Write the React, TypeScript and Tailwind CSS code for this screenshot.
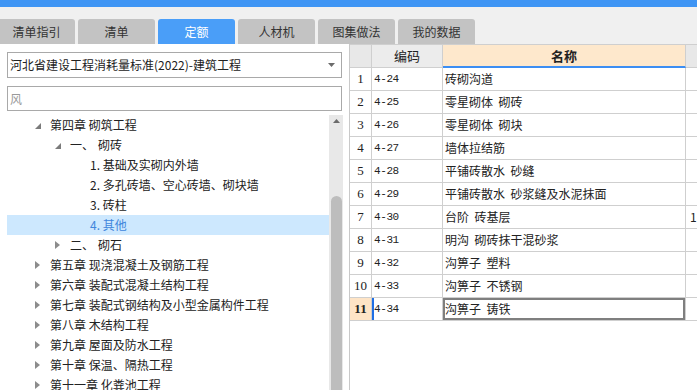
import { type ReactNode } from 'react'

// 定额库浏览面板：左侧章节树，右侧定额子目表

const tabs = ['清单指引', '清单', '定额', '人材机', '图集做法', '我的数据']
const activeTab = '定额'

type TreeNode = {
  label: ReactNode
  level: 0 | 1 | 2
  state?: 'open' | 'closed'
  selected?: boolean
}

const tree: TreeNode[] = [
  { label: '第四章 砌筑工程', level: 0, state: 'open' },
  { label: <><span>一、</span><span className="ml-[4px]">砌砖</span></>, level: 1, state: 'open' },
  { label: '1. 基础及实砌内外墙', level: 2 },
  { label: '2. 多孔砖墙、空心砖墙、砌块墙', level: 2 },
  { label: '3. 砖柱', level: 2 },
  { label: '4. 其他', level: 2, selected: true },
  { label: <><span>二、</span><span className="ml-[4px]">砌石</span></>, level: 1, state: 'closed' },
  { label: '第五章 现浇混凝土及钢筋工程', level: 0, state: 'closed' },
  { label: '第六章 装配式混凝土结构工程', level: 0, state: 'closed' },
  { label: '第七章 装配式钢结构及小型金属构件工程', level: 0, state: 'closed' },
  { label: '第八章 木结构工程', level: 0, state: 'closed' },
  { label: '第九章 屋面及防水工程', level: 0, state: 'closed' },
  { label: '第十章 保温、隔热工程', level: 0, state: 'closed' },
  { label: '第十一章 化粪池工程', level: 0, state: 'closed' },
]

const rows = [
  ['4-24', '砖砌沟道'],
  ['4-25', '零星砌体  砌砖'],
  ['4-26', '零星砌体  砌块'],
  ['4-27', '墙体拉结筋'],
  ['4-28', '平铺砖散水  砂缝'],
  ['4-29', '平铺砖散水  砂浆缝及水泥抹面'],
  ['4-30', '台阶  砖基层'],
  ['4-31', '明沟  砌砖抹干混砂浆'],
  ['4-32', '沟箅子  塑料'],
  ['4-33', '沟箅子  不锈钢'],
  ['4-34', '沟箅子  铸铁'],
]
const currentRow = 10

const indent = ['w-[28px]', 'w-[48px]', 'w-[68px]']

function Caret({ state }: { state?: 'open' | 'closed' }) {
  if (state === 'open')
    return (
      <svg width="6" height="6" viewBox="0 0 6 6" className="mt-[2px]">
        <path d="M6 0 L6 6 L0 6 Z" fill="#7b7b7b" />
      </svg>
    )
  if (state === 'closed')
    return (
      <svg width="5" height="8" viewBox="0 0 5 8">
        <path d="M0 0 L5 4 L0 8 Z" fill="#8c8c8c" />
      </svg>
    )
  return null
}

export default function App() {
  return (
    <div
      className="w-[697px] h-[390px] overflow-hidden bg-[#f0f0f0] text-[12px] text-[#222] flex flex-col"
      style={{ fontFamily: '"Noto Sans CJK SC", "Noto Sans", sans-serif' }}
    >
      <div className="h-[7px] bg-[#3f95f4] shrink-0" />

      {/* tab strip */}
      <div className="h-[37px] shrink-0 flex items-end gap-[3px] ml-[-2px]">
        {tabs.map((t) => (
          <div
            key={t}
            className={
              t === activeTab
                ? 'w-[77px] h-[25px] rounded-t-[3px] flex items-center justify-center bg-[#4a9ef8] text-white'
                : 'w-[77px] h-[25px] rounded-t-[3px] flex items-center justify-center bg-[#c3c3c3] text-[#333]'
            }
          >
            {t}
          </div>
        ))}
      </div>

      <div className="flex flex-1 min-h-0">
        {/* left: library + chapter tree */}
        <div className="w-[349px] shrink-0 bg-white flex flex-col">
          <div className="mt-[8px] ml-[7px] w-[335px] h-[26px] border border-[#a9a9a9] flex items-center pl-[2px] pr-[6px]">
            <span className="flex-1">河北省建设工程消耗量标准(2022)-建筑工程</span>
            <svg width="7" height="4" viewBox="0 0 7 4">
              <path d="M0 0 L7 0 L3.5 4 Z" fill="#6b6b6b" />
            </svg>
          </div>
          <div className="mt-[8px] ml-[7px] w-[335px] h-[25px] border border-[#a9a9a9] flex items-center pl-[2px] text-[#9a9a9a]">
            风
          </div>

          <div className="mt-[4px] flex flex-1 min-h-0">
            <div className="ml-[7px] w-[322px] flex flex-col">
              {tree.map((n, i) => (
                <div
                  key={i}
                  className={
                    n.selected
                      ? 'h-[20px] shrink-0 flex items-center bg-[#cde8fe] text-[#3f86dc]'
                      : 'h-[20px] shrink-0 flex items-center'
                  }
                >
                  <div className={indent[n.level]} />
                  <div className="w-[15px] flex items-center">
                    <Caret state={n.state} />
                  </div>
                  <span className="whitespace-nowrap">{n.label}</span>
                </div>
              ))}
            </div>
            <div className="w-[14px] bg-[#e8e8e8] flex flex-col items-center">
              <svg width="7" height="4" viewBox="0 0 7 4" className="mt-[4px]">
                <path d="M3.5 0 L7 4 L0 4 Z" fill="#6b6b6b" />
              </svg>
              <div className="mt-[73px] w-[11px] flex-1 rounded-t-[6px] bg-[#bdbdbd]" />
            </div>
          </div>
        </div>

        {/* right: quota grid */}
        <div className="flex-1 bg-white border-l border-[#c9c9c9] flex flex-col">
          <div className="h-[24px] flex border-t border-[#cfcfcf] shrink-0">
            <div className="w-[22px] bg-[#e8e8e8] border-r border-b border-[#cfcfcf]" />
            <div className="w-[71px] bg-[#ececec] border-r border-b border-[#cfcfcf] flex items-center justify-center text-[13px]">
              编码
            </div>
            <div className="w-[243px] bg-[#fee8cc] border-r border-[#cfcfcf] border-b-2 border-b-[#3c8ef3] flex items-center justify-center font-bold text-[13px]">
              名称
            </div>
            <div className="flex-1 bg-[#e8e8e8] border-b border-[#cfcfcf]" />
          </div>

          {rows.map(([code, name], i) => {
            const cur = i === currentRow
            return (
              <div key={code} className="h-[23px] flex shrink-0">
                <div
                  className={
                    cur
                      ? 'w-[22px] bg-[#fee4c6] border-r border-b border-[#cfcfcf] flex items-center justify-center font-bold text-[13px]'
                      : 'w-[22px] border-r border-b border-[#cfcfcf] flex items-center justify-center text-[13px]'
                  }
                  style={{ fontFamily: '"Liberation Serif", serif' }}
                >
                  {i + 1}
                </div>
                <div
                  className={
                    cur
                      ? 'w-[71px] border-r border-b border-[#cfcfcf] flex items-center pl-[2px] text-[11px] tracking-[-0.4px] shadow-[inset_2px_0_0_#1f6fe5]'
                      : 'w-[71px] border-r border-b border-[#cfcfcf] flex items-center pl-[2px] text-[11px] tracking-[-0.4px]'
                  }
                  style={{ fontFamily: '"Liberation Mono", monospace' }}
                >
                  {code}
                </div>
                <div
                  className={
                    cur
                      ? 'w-[243px] border-r border-b border-[#cfcfcf] flex items-center pl-[2px] whitespace-pre shadow-[inset_0_0_0_2px_#7f7f7f]'
                      : 'w-[243px] border-r border-b border-[#cfcfcf] flex items-center pl-[2px] whitespace-pre'
                  }
                >
                  {name}
                </div>
                <div className="flex-1 border-b border-[#cfcfcf] flex items-center pl-[4px] overflow-hidden">
                  {code === '4-30' ? '1' : ''}
                </div>
              </div>
            )
          })}
        </div>
      </div>
    </div>
  )
}
